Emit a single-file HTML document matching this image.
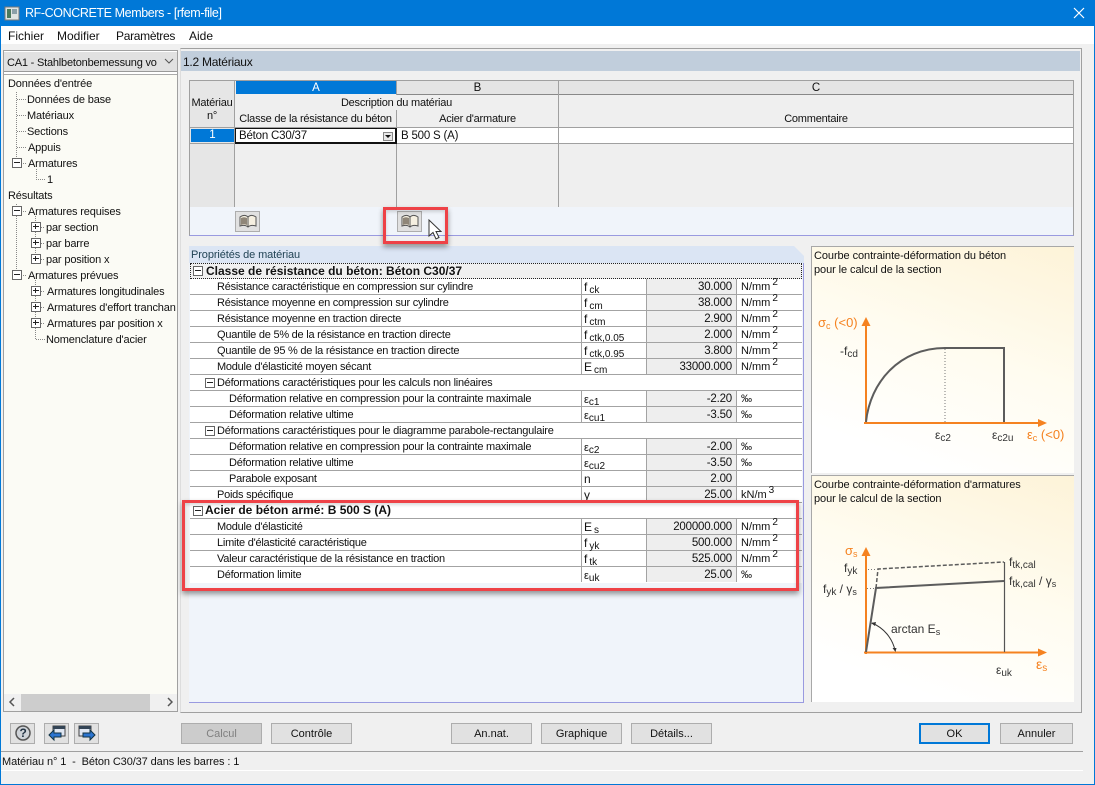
<!DOCTYPE html>
<html><head><meta charset="utf-8"><style>
*{box-sizing:border-box}
html,body{margin:0;padding:0}
body{width:1095px;height:785px;overflow:hidden;position:relative;background:#f0f0f0;font:11px/16px "Liberation Sans",sans-serif;color:#111}
div,span.a,svg{position:absolute}
div{white-space:nowrap}
.r{left:190px;width:612px;height:16px;background:#fff;border-bottom:1px solid #a3a3a3}
.n{left:27px;top:0;letter-spacing:-.24px}.m{left:39px;top:0;letter-spacing:-.24px}
.sy{left:394px;top:0;font-size:12px}
.sy i{font-style:normal;font-size:10px;position:relative;top:2px;margin-left:2px}
.e{font-size:11px}
.e+i{margin-left:0!important}
.v{left:456px;top:0;width:91px;height:15px;background:#eee;text-align:right;padding-right:4px;font-size:11.5px;letter-spacing:-.2px;border-left:1px solid #a3a3a3;border-right:1px solid #a3a3a3}
.vl{left:391px;top:0;width:1px;height:15px;background:#a3a3a3}
.u{left:551px;top:0;font-size:11px}
.u sup{font-size:10px;line-height:0;margin-left:2px}
.bx{width:10px;height:10px;border:1px solid #666;background:#fff}
.bx:after{content:"";position:absolute;left:1px;top:3px;width:6px;height:1px;background:#222}
.g{font-weight:bold;font-size:12px;left:15px;top:0}
.b{height:21px;top:723px;background:#e1e1e1;border:1px solid #adadad;text-align:center;line-height:20px;font-size:11px}
.tr{font-size:11px;letter-spacing:-.15px}
.h{font-size:11px;letter-spacing:-.22px;text-align:center}
.rb{border:3px solid #ee4247;box-shadow:0 3px 5px rgba(0,0,0,.4),inset 0 2px 3px rgba(0,0,0,.15)}
.p{background:linear-gradient(200deg,#fdf3d8 0%,#fffcf0 45%,#fff 85%);border:1px solid #a8a8a8;border-right:0;border-bottom:0}
svg text{font-family:"Liberation Sans",sans-serif}
</style></head><body>
<div style="left:0;top:0;width:1095px;height:26px;background:#0078d7"></div>
<div style="left:0;top:26px;width:1px;height:759px;background:#0078d7"></div>
<div style="left:1094px;top:26px;width:1px;height:759px;background:#0078d7"></div>
<div style="left:0;top:784px;width:1095px;height:1px;background:#0078d7"></div>
<svg style="left:4px;top:5px" width="16" height="16"><rect x="1" y="2" width="14" height="13" fill="#dfe4e2" stroke="#777"/><rect x="3" y="4" width="4" height="9" fill="#4b7a5c"/><rect x="8" y="4" width="5" height="5" fill="#8aa0a8"/></svg>
<div style="left:25px;top:5px;color:#fff;font-size:12.5px;letter-spacing:-.4px;line-height:16px">RF-CONCRETE Members - [rfem-file]</div>
<svg style="left:1072px;top:6px" width="14" height="14"><path d="M2 2 L12 12 M12 2 L2 12" stroke="#fff" stroke-width="1.2"/></svg>
<div style="left:1px;top:26px;width:1093px;height:18px;background:#fff"></div>
<div style="left:8px;top:28px;font-size:12px">Fichier</div>
<div style="left:57px;top:28px;font-size:12px">Modifier</div>
<div style="left:116px;top:28px;font-size:12px;letter-spacing:-.3px">Paramètres</div>
<div style="left:189px;top:28px;font-size:12px">Aide</div>

<!-- left panel -->
<div style="left:3px;top:50px;width:175px;height:662px;border:1px solid #a0a0a0;background:#fff"></div>
<div style="left:4px;top:52px;width:173px;height:20px;background:#e1e1e1;border-bottom:1px solid #999"></div>
<div style="left:7px;top:55px;font-size:11px;letter-spacing:-.2px">CA1 - Stahlbetonbemessung vo</div>
<svg style="left:164px;top:58px" width="10" height="8"><path d="M1 1 L5 5 L9 1" fill="none" stroke="#555"/></svg>
<div style="left:4px;top:74px;width:173px;height:620px;background:#fbfbf5;border-top:1px solid #aaa"></div>
<svg style="left:0;top:74px" width="178" height="280"><g stroke="#888" stroke-dasharray="1 1" fill="none"><path d="M16.5 18V85M17 25.5H26M17 41.5H26M17 57.5H26M17 73.5H26M23 89.5H26M36.5 95V105.5H45M16.5 130V196M23 137.5H26M23 201.5H26M35.5 142V186M41 153.5H45M41 169.5H45M41 185.5H45M35.5 206V265.5H45M41 217.5H45M41 233.5H45M41 249.5H45"/></g></svg>
<div class="bx" style="left:12px;top:158px"></div>
<div class="bx" style="left:12px;top:206px"></div>
<div class="bx" style="left:12px;top:270px"></div>
<div class="bx" style="left:31px;top:222px"></div><div class="bx" style="left:31px;top:238px"></div><div class="bx" style="left:31px;top:254px"></div>
<div class="bx" style="left:31px;top:286px"></div><div class="bx" style="left:31px;top:302px"></div><div class="bx" style="left:31px;top:318px"></div>
<svg style="left:31px;top:222px" width="10" height="112"><path d="M4.5 2V7M4.5 18V23M4.5 34V39M4.5 66V71M4.5 82V87M4.5 98V103" stroke="#222"/></svg>
<div class="tr" style="left:8px;top:76px">Données d'entrée</div>
<div class="tr" style="left:27px;top:92px">Données de base</div>
<div class="tr" style="left:27px;top:108px">Matériaux</div>
<div class="tr" style="left:27px;top:124px">Sections</div>
<div class="tr" style="left:28px;top:140px">Appuis</div>
<div class="tr" style="left:28px;top:156px">Armatures</div>
<div class="tr" style="left:47px;top:172px">1</div>
<div class="tr" style="left:8px;top:188px">Résultats</div>
<div class="tr" style="left:28px;top:204px">Armatures requises</div>
<div class="tr" style="left:46px;top:220px">par section</div>
<div class="tr" style="left:46px;top:236px">par barre</div>
<div class="tr" style="left:46px;top:252px">par position x</div>
<div class="tr" style="left:28px;top:268px">Armatures prévues</div>
<div class="tr" style="left:47px;top:284px">Armatures longitudinales</div>
<div class="tr" style="left:47px;top:300px;width:129px;overflow:hidden">Armatures d'effort tranchant</div>
<div class="tr" style="left:47px;top:316px">Armatures par position x</div>
<div class="tr" style="left:46px;top:332px">Nomenclature d'acier</div>
<div style="left:4px;top:694px;width:173px;height:17px;background:#f0f0f0"></div>
<div style="left:21px;top:694px;width:129px;height:17px;background:#cdcdcd"></div>
<svg style="left:8px;top:697px" width="165" height="11"><path d="M6 1 L2 5 L6 9M160 1 L164 5 L160 9" fill="none" stroke="#555" stroke-width="1.5"/></svg>

<!-- main frame -->
<div style="left:180px;top:48px;width:902px;height:665px;border:1px solid #a0a0a0;border-left:1px solid #ddd;background:#f0f0f0"></div>
<div style="left:181px;top:51px;width:899px;height:20px;background:#c1cedc"></div>
<div style="left:183px;top:54px;font-size:12px;letter-spacing:-.25px">1.2 Matériaux</div>

<!-- top table -->
<div style="left:189px;top:80px;width:885px;height:156px;background:#f0f4fa;border:1px solid #a0a0a0;border-bottom:1px solid #9a9ae0"></div>
<div style="left:190px;top:81px;width:883px;height:126px;background:#efefef"></div>
<div style="left:190px;top:81px;width:45px;height:126px;background:#e6e6e6;border-right:1px solid #a0a0a0"></div>
<div style="left:236px;top:81px;width:160px;height:13px;background:#0078d7;color:#fff;text-align:center;line-height:14px;font-size:11.5px">A</div>
<div style="left:397px;top:81px;width:161px;height:14px;background:#e4e4e4;text-align:center;line-height:14px;border-bottom:1px solid #888;font-size:11.5px">B</div>
<div style="left:559px;top:81px;width:514px;height:14px;background:#e4e4e4;text-align:center;line-height:14px;border-bottom:1px solid #888;font-size:11.5px">C</div>
<div class="h" style="left:190px;top:95px;width:44px">Matériau</div>
<div class="h" style="left:190px;top:108px;width:44px">n°</div>
<div class="h" style="left:235px;top:95px;width:323px">Description du matériau</div>
<div class="h" style="left:235px;top:111px;width:161px">Classe de la résistance du béton</div>
<div class="h" style="left:397px;top:111px;width:161px">Acier d'armature</div>
<div class="h" style="left:559px;top:111px;width:514px">Commentaire</div>
<div style="left:396px;top:81px;width:1px;height:126px;background:#a0a0a0"></div>
<div style="left:558px;top:81px;width:1px;height:126px;background:#a0a0a0"></div>
<div style="left:396px;top:95px;width:1px;height:15px;background:#efefef"></div>
<div style="left:235px;top:127px;width:838px;height:17px;background:#fff;border-bottom:1px solid #a0a0a0;border-top:1px solid #a0a0a0"></div>
<div style="left:396px;top:127px;width:1px;height:17px;background:#a0a0a0"></div>
<div style="left:558px;top:127px;width:1px;height:17px;background:#a0a0a0"></div>
<div style="left:190px;top:127px;width:44px;height:17px;background:#e6e6e6;border-top:1px solid #a0a0a0;border-bottom:1px solid #a0a0a0"></div>
<div style="left:191px;top:129px;width:43px;height:13px;background:#0078d7;color:#fff;text-align:center;line-height:13px;font-size:11.5px">1</div>
<div style="left:235px;top:128px;width:162px;height:16px;background:#fff;border:1px solid #111;border-width:1px 2px 2px 1px"></div>
<div style="left:239px;top:129px;font-size:11.5px;letter-spacing:-.2px;line-height:15px">Béton C30/37</div>
<div style="left:383px;top:132px;width:10px;height:9px;background:#e8e8e8;border:1px solid #888"></div>
<svg style="left:385px;top:135px" width="7" height="5"><path d="M0 0H6L3 3Z" fill="#111"/></svg>
<div style="left:401px;top:129px;font-size:11.5px;letter-spacing:-.2px;line-height:15px">B 500 S (A)</div>

<!-- book buttons -->
<div style="left:235px;top:211px;width:25px;height:21px;background:#e1e1e1;border:1px solid #adadad"></div>
<svg style="left:239px;top:214px" width="18" height="15"><path d="M1 3C4 1 7 1 9 3C11 1 14 1 17 3V12C14 11 11 11 9 13C7 11 4 11 1 12Z" fill="#f5efe0" stroke="#555"/><path d="M9 3V13" stroke="#555"/><path d="M2 4C4 3 6 3 8 4V11C6 10 4 10 2 11Z" fill="#8f8678"/></svg>
<div style="left:397px;top:211px;width:25px;height:21px;background:#e1e1e1;border:1px solid #adadad"></div>
<svg style="left:401px;top:214px" width="18" height="15"><path d="M1 3C4 1 7 1 9 3C11 1 14 1 17 3V12C14 11 11 11 9 13C7 11 4 11 1 12Z" fill="#f5efe0" stroke="#555"/><path d="M9 3V13" stroke="#555"/><path d="M2 4C4 3 6 3 8 4V11C6 10 4 10 2 11Z" fill="#8f8678"/></svg>

<!-- properties -->
<div style="left:189px;top:246px;width:615px;height:457px;background:#f0f4fa;border-right:1px solid #9a9ae0;border-bottom:1px solid #9a9ae0"></div>
<div style="left:189px;top:246px;width:615px;height:17px;background:#dbe5f4"></div>
<div style="left:191px;top:247px;color:#245;font-size:11px;letter-spacing:-.1px;line-height:16px">Propriétés de matériau</div>
<svg style="left:794px;top:246px" width="10" height="10"><path d="M0 0H10V10Z" fill="#f0f0f0"/></svg>

<div class="r" style="top:263px;background:#f0f0f0;border:1px dotted #222"><div class="bx" style="left:2px;top:2px"></div><div class="g" style="top:-1px">Classe de résistance du béton: Béton C30/37</div></div>
<div class="r" style="top:279px"><div class="n">Résistance caractéristique en compression sur cylindre</div><div class="vl"></div><div class="sy">f<i>ck</i></div><div class="v">30.000</div><div class="u">N/mm<sup>2</sup></div></div>
<div class="r" style="top:295px"><div class="n">Résistance moyenne en compression sur cylindre</div><div class="vl"></div><div class="sy">f<i>cm</i></div><div class="v">38.000</div><div class="u">N/mm<sup>2</sup></div></div>
<div class="r" style="top:311px"><div class="n">Résistance moyenne en traction directe</div><div class="vl"></div><div class="sy">f<i>ctm</i></div><div class="v">2.900</div><div class="u">N/mm<sup>2</sup></div></div>
<div class="r" style="top:327px"><div class="n">Quantile de 5% de la résistance en traction directe</div><div class="vl"></div><div class="sy">f<i>ctk,0.05</i></div><div class="v">2.000</div><div class="u">N/mm<sup>2</sup></div></div>
<div class="r" style="top:343px"><div class="n">Quantile de 95 % de la résistance en traction directe</div><div class="vl"></div><div class="sy">f<i>ctk,0.95</i></div><div class="v">3.800</div><div class="u">N/mm<sup>2</sup></div></div>
<div class="r" style="top:359px"><div class="n">Module d'élasticité moyen sécant</div><div class="vl"></div><div class="sy">E<i>cm</i></div><div class="v">33000.000</div><div class="u">N/mm<sup>2</sup></div></div>
<div class="r" style="top:375px"><div class="bx" style="left:15px;top:3px"></div><div class="n">Déformations caractéristiques pour les calculs non linéaires</div></div>
<div class="r" style="top:391px"><div class="m">Déformation relative en compression pour la contrainte maximale</div><div class="vl"></div><div class="sy"><span class="e">ε</span><i>c1</i></div><div class="v">-2.20</div><div class="u">‰</div></div>
<div class="r" style="top:407px"><div class="m">Déformation relative ultime</div><div class="vl"></div><div class="sy"><span class="e">ε</span><i>cu1</i></div><div class="v">-3.50</div><div class="u">‰</div></div>
<div class="r" style="top:423px"><div class="bx" style="left:15px;top:3px"></div><div class="n">Déformations caractéristiques pour le diagramme parabole-rectangulaire</div></div>
<div class="r" style="top:439px"><div class="m">Déformation relative en compression pour la contrainte maximale</div><div class="vl"></div><div class="sy"><span class="e">ε</span><i>c2</i></div><div class="v">-2.00</div><div class="u">‰</div></div>
<div class="r" style="top:455px"><div class="m">Déformation relative ultime</div><div class="vl"></div><div class="sy"><span class="e">ε</span><i>cu2</i></div><div class="v">-3.50</div><div class="u">‰</div></div>
<div class="r" style="top:471px"><div class="m">Parabole exposant</div><div class="vl"></div><div class="sy">n</div><div class="v">2.00</div></div>
<div class="r" style="top:487px"><div class="n">Poids spécifique</div><div class="vl"></div><div class="sy">γ</div><div class="v">25.00</div><div class="u">kN/m<sup>3</sup></div></div>
<div class="r" style="top:503px"><div class="bx" style="left:3px;top:3px"></div><div class="g" style="top:-1px">Acier de béton armé: B 500 S (A)</div></div>
<div class="r" style="top:519px"><div class="n">Module d'élasticité</div><div class="vl"></div><div class="sy">E<i>s</i></div><div class="v">200000.000</div><div class="u">N/mm<sup>2</sup></div></div>
<div class="r" style="top:535px"><div class="n">Limite d'élasticité caractéristique</div><div class="vl"></div><div class="sy">f<i>yk</i></div><div class="v">500.000</div><div class="u">N/mm<sup>2</sup></div></div>
<div class="r" style="top:551px"><div class="n">Valeur caractéristique de la résistance en traction</div><div class="vl"></div><div class="sy">f<i>tk</i></div><div class="v">525.000</div><div class="u">N/mm<sup>2</sup></div></div>
<div class="r" style="top:567px;border-bottom:0"><div class="n">Déformation limite</div><div class="vl"></div><div class="sy"><span class="e">ε</span><i>uk</i></div><div class="v">25.00</div><div class="u">‰</div></div>

<!-- diagrams -->
<div class="p" style="left:811px;top:246px;width:263px;height:227px"></div>
<div style="left:814px;top:249px;font-size:11px;letter-spacing:-.08px;line-height:14px">Courbe contrainte-déformation du béton<br>pour le calcul de la section</div>
<svg style="left:811px;top:300px" width="263" height="150"><g transform="translate(-811 -300)"><path d="M866 424V325" stroke="#f58220" stroke-width="2"/><path d="M866 317l-4.500 9h9z" fill="#f58220"/><path d="M864 423H1040" stroke="#f58220" stroke-width="2"/><path d="M1047 423l-9-4v8z" fill="#f58220"/><path d="M866 422C870 382 900 348 945 348H1004V422" fill="none" stroke="#5c5c5c" stroke-width="2"/><path d="M945 349V422" stroke="#777" stroke-dasharray="1 2"/>
<text x="818" y="327" fill="#f58220" font-size="13">σ<tspan font-size="9" dy="2">c</tspan><tspan dy="-2"> (&lt;0)</tspan></text>
<text x="840" y="355" fill="#333" font-size="12">-f<tspan font-size="10" dy="2">cd</tspan></text>
<text x="935" y="439" fill="#333" font-size="12">ε<tspan font-size="10" dy="2">c2</tspan></text>
<text x="992" y="439" fill="#333" font-size="12">ε<tspan font-size="10" dy="2">c2u</tspan></text>
<text x="1027" y="439" fill="#f58220" font-size="13">ε<tspan font-size="9" dy="2">c</tspan><tspan dy="-2"> (&lt;0)</tspan></text></g></svg>
<div class="p" style="left:811px;top:475px;width:263px;height:227px"></div>
<div style="left:814px;top:478px;font-size:11px;letter-spacing:-.08px;line-height:14px">Courbe contrainte-déformation d'armatures<br>pour le calcul de la section</div>
<svg style="left:811px;top:530px" width="263" height="160"><g transform="translate(-811 -530)"><path d="M866 654V555" stroke="#f58220" stroke-width="2"/><path d="M866 547l-4.500 9h9z" fill="#f58220"/><path d="M864 652.500H1040" stroke="#f58220" stroke-width="2"/><path d="M1047 652.500l-9-4v8z" fill="#f58220"/><path d="M866 652L876 588L1004 581" fill="none" stroke="#5c5c5c" stroke-width="2"/><path d="M876 588L878 569L1004 562" fill="none" stroke="#5c5c5c" stroke-width="1.500" stroke-dasharray="4 2"/><path d="M1004.500 562V652" stroke="#555" stroke-width="1.200"/><path d="M868 569.500H877M867 588.500H875" stroke="#777" stroke-dasharray="1 2"/><path d="M872 623C884 628 892 638 895 650" fill="none" stroke="#333"/><path d="M871 623l5-1-1 4zM895.500 652l-3-4 4 0z" fill="#333"/>
<text x="845" y="555" fill="#f58220" font-size="13">σ<tspan font-size="9" dy="2">s</tspan></text>
<text x="844" y="572" fill="#333" font-size="12">f<tspan font-size="10" dy="2">yk</tspan></text>
<text x="823" y="593" fill="#333" font-size="12">f<tspan font-size="10" dy="2">yk</tspan><tspan dy="-2"> / γ</tspan><tspan font-size="9" dy="2">s</tspan></text>
<text x="1009" y="566" fill="#333" font-size="12">f<tspan font-size="10" dy="2">tk,cal</tspan></text>
<text x="1009" y="585" fill="#333" font-size="12">f<tspan font-size="10" dy="2">tk,cal</tspan><tspan dy="-2"> / γ</tspan><tspan font-size="9" dy="2">s</tspan></text>
<text x="891" y="633" fill="#333" font-size="12">arctan E<tspan font-size="9" dy="2">s</tspan></text>
<text x="996" y="674" fill="#333" font-size="12">ε<tspan font-size="10" dy="2">uk</tspan></text>
<text x="1036" y="669" fill="#f58220" font-size="14">ε<tspan font-size="10" dy="2">s</tspan></text></g></svg>

<!-- red highlight -->
<div class="rb" style="left:383px;top:207px;width:65px;height:37px"></div>
<div class="rb" style="left:182px;top:500px;width:617px;height:91px"></div>
<svg style="left:428px;top:219px" width="14" height="22"><path d="M1 1V17L5 13.500L8 20L11 18.500L8 12.500H13Z" fill="#fff" stroke="#333"/></svg>

<!-- bottom -->
<div class="b" style="left:10px;width:25px"></div>
<svg style="left:14px;top:724px" width="18" height="18"><circle cx="9" cy="9" r="7" fill="#cfd3d8" stroke="#555" stroke-width="1.500"/><text x="5.500" y="13" font-size="12" font-weight="bold" fill="#234">?</text></svg>
<div class="b" style="left:44px;width:25px"></div>
<svg style="left:48px;top:724px" width="18" height="18"><rect x="5" y="2" width="12" height="10" fill="#dfe6f2" stroke="#444"/><rect x="5" y="2" width="12" height="3" fill="#345"/><path d="M1 11L6 6V9H13V13H6V16Z" fill="#2b74d0" stroke="#134"/></svg>
<div class="b" style="left:74px;width:25px"></div>
<svg style="left:78px;top:724px" width="18" height="18"><rect x="1" y="2" width="12" height="10" fill="#dfe6f2" stroke="#444"/><rect x="1" y="2" width="12" height="3" fill="#345"/><path d="M17 11L12 6V9H5V13H12V16Z" fill="#2b74d0" stroke="#134"/></svg>
<div class="b" style="left:181px;width:81px;background:#ccc;color:#808080">Calcul</div>
<div class="b" style="left:271px;width:81px">Contrôle</div>
<div class="b" style="left:451px;width:81px">An.nat.</div>
<div class="b" style="left:541px;width:81px">Graphique</div>
<div class="b" style="left:631px;width:81px">Détails...</div>
<div class="b" style="left:919px;width:71px;border:2px solid #0078d7;line-height:18px">OK</div>
<div class="b" style="left:1000px;width:73px">Annuler</div>
<div style="left:1px;top:751px;width:1082px;height:1px;background:#a0a0a0"></div>
<div style="left:1px;top:770px;width:1082px;height:1px;background:#fff"></div>
<div style="left:2px;top:754px;font-size:11px;letter-spacing:-.1px">Matériau n° 1 &nbsp;-&nbsp; Béton C30/37 dans les barres : 1</div>
</body></html>
